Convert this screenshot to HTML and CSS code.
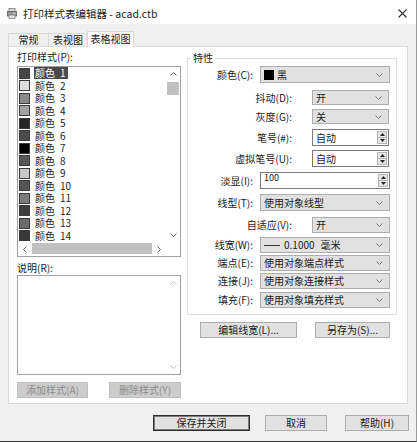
FILE: index.html
```html
<!DOCTYPE html>
<html lang="zh-CN">
<head>
<meta charset="utf-8">
<title>打印样式表编辑器 - acad.ctb</title>
<link rel="stylesheet" href="styles.css">
</head>
<body>
<div class="window">
  <div class="titlebar">
    <svg class="appicon" viewBox="0 0 10 11" aria-hidden="true">
      <rect x="2" y="0.5" width="6" height="3" fill="#d8d8d8" stroke="#7a7a7a" stroke-width="0.8"/>
      <rect x="0.5" y="3.5" width="9" height="4.5" fill="#9a9a9a" stroke="#5a5a5a" stroke-width="0.8"/>
      <rect x="2" y="7" width="6" height="3.5" fill="#e8e8e8" stroke="#7a7a7a" stroke-width="0.8"/>
      <rect x="6.5" y="4.6" width="1.6" height="1.2" fill="#e0e0e0"/>
    </svg>
    <span class="title">打印样式表编辑器 - acad.ctb</span>
    <svg class="close" viewBox="0 0 9 9" aria-hidden="true">
      <path d="M0.5 0.5 L8.5 8.5 M8.5 0.5 L0.5 8.5" stroke="#333" stroke-width="1.1" fill="none"/>
    </svg>
  </div>

  <div class="tabs">
    <div class="tab t1">常规</div>
    <div class="tab t2">表视图</div>
    <div class="tab t3 active">表格视图</div>
  </div>

  <div class="panel">
    <div class="leftcol">
      <div class="lbl">打印样式(P):</div>
      <div class="listbox">
        <div class="items">
          <div class="item"><span class="sw" style="background:#474747"></span><span class="name sel">颜色<span class="num">1</span></span></div>
          <div class="item"><span class="sw" style="background:#dedede"></span><span class="name">颜色<span class="num">2</span></span></div>
          <div class="item"><span class="sw" style="background:#8a8a8a"></span><span class="name">颜色<span class="num">3</span></span></div>
          <div class="item"><span class="sw" style="background:#a2a2a2"></span><span class="name">颜色<span class="num">4</span></span></div>
          <div class="item"><span class="sw" style="background:#262626"></span><span class="name">颜色<span class="num">5</span></span></div>
          <div class="item"><span class="sw" style="background:#4b4b4b"></span><span class="name">颜色<span class="num">6</span></span></div>
          <div class="item"><span class="sw" style="background:#000000"></span><span class="name">颜色<span class="num">7</span></span></div>
          <div class="item"><span class="sw" style="background:#575757"></span><span class="name">颜色<span class="num">8</span></span></div>
          <div class="item"><span class="sw" style="background:#c8c8c8"></span><span class="name">颜色<span class="num">9</span></span></div>
          <div class="item"><span class="sw" style="background:#555555"></span><span class="name">颜色<span class="num">10</span></span></div>
          <div class="item"><span class="sw" style="background:#7b7b7b"></span><span class="name">颜色<span class="num">11</span></span></div>
          <div class="item"><span class="sw" style="background:#3d3d3d"></span><span class="name">颜色<span class="num">12</span></span></div>
          <div class="item"><span class="sw" style="background:#6b6b6b"></span><span class="name">颜色<span class="num">13</span></span></div>
          <div class="item"><span class="sw" style="background:#383838"></span><span class="name">颜色<span class="num">14</span></span></div>
          <div class="item"><span class="sw" style="background:#151515"></span><span class="name">颜色<span class="num">15</span></span></div>
        </div>
        <div class="vscroll">
          <div class="arrow"><svg viewBox="0 0 7 4"><path d="M0.5 3.5 L3.5 0.5 L6.5 3.5" class="chev"/></svg></div>
          <div class="vtrack"><div class="vthumb"></div></div>
          <div class="arrow"><svg viewBox="0 0 7 4"><path d="M0.5 0.5 L3.5 3.5 L6.5 0.5" class="chev"/></svg></div>
        </div>
        <div class="hscroll">
          <div class="harrow"><svg viewBox="0 0 4 7"><path d="M3.5 0.5 L0.5 3.5 L3.5 6.5" class="chev"/></svg></div>
          <div class="htrack"><div class="hthumb"></div></div>
          <div class="harrow"><svg viewBox="0 0 4 7"><path d="M0.5 0.5 L3.5 3.5 L0.5 6.5" class="chev"/></svg></div>
        </div>
        <div class="corner"></div>
      </div>

      <div class="lbl desc-lbl">说明(R):</div>
      <div class="descbox">
        <div class="descarea"></div>
        <div class="vscroll off">
          <div class="arrow"><svg viewBox="0 0 7 4"><path d="M0.5 3.5 L3.5 0.5 L6.5 3.5" class="chev"/></svg></div>
          <div class="vtrack"></div>
          <div class="arrow"><svg viewBox="0 0 7 4"><path d="M0.5 0.5 L3.5 3.5 L6.5 0.5" class="chev"/></svg></div>
        </div>
      </div>

      <div class="btnrow">
        <button class="btn disabled w71">添加样式(A)</button>
        <button class="btn disabled w72">删除样式(Y)</button>
      </div>
    </div>

    <div class="rightcol">
      <fieldset class="group">
        <legend>特性</legend>

        <div class="row">
          <span class="lab w">颜色(C):</span>
          <div class="combo wide"><span class="blk"></span><span>黑</span><svg class="dd" viewBox="0 0 7 4"><path d="M0.5 0.5 L3.5 3.5 L6.5 0.5" class="chev"/></svg></div>
        </div>

        <div class="row h15 mt7">
          <span class="lab n">抖动(D):</span>
          <div class="combo narrow"><span>开</span><svg class="dd" viewBox="0 0 7 4"><path d="M0.5 0.5 L3.5 3.5 L6.5 0.5" class="chev"/></svg></div>
        </div>

        <div class="row h15 mt4">
          <span class="lab n">灰度(G):</span>
          <div class="combo narrow"><span>关</span><svg class="dd" viewBox="0 0 7 4"><path d="M0.5 0.5 L3.5 3.5 L6.5 0.5" class="chev"/></svg></div>
        </div>

        <div class="row mt5">
          <span class="lab n">笔号(#):</span>
          <div class="spin narrow"><span class="val">自动</span><span class="spinbtns"><span class="sb"><svg viewBox="0 0 5 3"><path d="M0 3 L2.5 0 L5 3Z" fill="#222"/></svg></span><span class="sb"><svg viewBox="0 0 5 3"><path d="M0 0 L2.5 3 L5 0Z" fill="#222"/></svg></span></span></div>
        </div>

        <div class="row mt4">
          <span class="lab n">虚拟笔号(U):</span>
          <div class="spin narrow"><span class="val">自动</span><span class="spinbtns"><span class="sb"><svg viewBox="0 0 5 3"><path d="M0 3 L2.5 0 L5 3Z" fill="#222"/></svg></span><span class="sb"><svg viewBox="0 0 5 3"><path d="M0 0 L2.5 3 L5 0Z" fill="#222"/></svg></span></span></div>
        </div>

        <div class="row mt5">
          <span class="lab w">淡显(I):</span>
          <div class="spin wide"><span class="val small">100</span><span class="spinbtns"><span class="sb"><svg viewBox="0 0 5 3"><path d="M0 3 L2.5 0 L5 3Z" fill="#222"/></svg></span><span class="sb"><svg viewBox="0 0 5 3"><path d="M0 0 L2.5 3 L5 0Z" fill="#222"/></svg></span></span></div>
        </div>

        <div class="row mt5">
          <span class="lab w">线型(T):</span>
          <div class="combo wide"><span>使用对象线型</span><svg class="dd" viewBox="0 0 7 4"><path d="M0.5 0.5 L3.5 3.5 L6.5 0.5" class="chev"/></svg></div>
        </div>

        <div class="row h16 mt6">
          <span class="lab n">自适应(V):</span>
          <div class="combo narrow2"><span>开</span><svg class="dd" viewBox="0 0 7 4"><path d="M0.5 0.5 L3.5 3.5 L6.5 0.5" class="chev"/></svg></div>
        </div>

        <div class="row h16 mt4">
          <span class="lab w">线宽(W):</span>
          <div class="combo wide"><span class="lw"></span><span class="lwnum">0.1000</span><span>毫米</span><svg class="dd" viewBox="0 0 7 4"><path d="M0.5 0.5 L3.5 3.5 L6.5 0.5" class="chev"/></svg></div>
        </div>

        <div class="row h16 mt2">
          <span class="lab w">端点(E):</span>
          <div class="combo wide"><span>使用对象端点样式</span><svg class="dd" viewBox="0 0 7 4"><path d="M0.5 0.5 L3.5 3.5 L6.5 0.5" class="chev"/></svg></div>
        </div>

        <div class="row h16 mt2">
          <span class="lab w">连接(J):</span>
          <div class="combo wide"><span>使用对象连接样式</span><svg class="dd" viewBox="0 0 7 4"><path d="M0.5 0.5 L3.5 3.5 L6.5 0.5" class="chev"/></svg></div>
        </div>

        <div class="row h16 mt3">
          <span class="lab w">填充(F):</span>
          <div class="combo wide"><span>使用对象填充样式</span><svg class="dd" viewBox="0 0 7 4"><path d="M0.5 0.5 L3.5 3.5 L6.5 0.5" class="chev"/></svg></div>
        </div>
      </fieldset>

      <div class="btnrow2">
        <button class="btn w97">编辑线宽(L)...</button>
        <button class="btn w75">另存为(S)...</button>
      </div>
    </div>
  </div>

  <div class="footer">
    <button class="btn default w97">保存并关闭</button>
    <button class="btn w62">取消</button>
    <button class="btn w64">帮助(H)</button>
  </div>
</div>
</body>
</html>
```

FILE: styles.css
```css
html, body {
  margin: 0;
  padding: 0;
}

body {
  font-family: "Noto Sans CJK SC", "Noto Sans", sans-serif;
  font-size: 10px;
  color: #1a1a1a;
  background: #f0f0f0;
}

.window {
  width: 417px;
  height: 442px;
  box-sizing: border-box;
  background: #f0f0f0;
  border-right: 1px solid #9a9a9a;
  border-bottom: 1px solid #3a3a3a;
  display: flex;
  flex-direction: column;
  overflow: hidden;
}

/* title bar */
.titlebar {
  height: 24px;
  flex: none;
  box-sizing: border-box;
  padding-top: 3px;
  background: #fff;
  display: flex;
  align-items: center;
}

.appicon {
  width: 10px;
  height: 11px;
  margin-left: 7px;
  margin-right: 6px;
  flex: none;
}

.title {
  flex: 1;
  font-size: 10.5px;
  line-height: 14px;
  color: #1a1a1a;
}

.close {
  width: 9px;
  height: 9px;
  margin-right: 9px;
  flex: none;
}

/* tabs */
.tabs {
  display: flex;
  align-items: flex-end;
  height: 15px;
  margin: 7px 0 0 8px;
  flex: none;
}

.tab {
  height: 13px;
  box-sizing: border-box;
  border: 1px solid #d9d9d9;
  border-bottom: none;
  background: #f0f0f0;
  text-align: center;
  line-height: 12px;
  font-size: 10px;
}

.t1 { width: 41px; }
.t2 { width: 40px; margin-left: -1px; }
.t3 { width: 47px; margin-left: -1px; }

.tab.active {
  height: 16px;
  margin-bottom: -1px;
  padding-top: 1px;
  background: #fff;
  position: relative;
  z-index: 1;
}

/* panel */
.panel {
  margin-left: 8px;
  width: 400px;
  height: 358px;
  flex: none;
  box-sizing: border-box;
  border: 1px solid #d9d9d9;
  background: #fff;
  display: flex;
  gap: 6px;
  padding: 4px 0 0 8px;
}

.leftcol {
  width: 164px;
  flex: none;
  display: flex;
  flex-direction: column;
}

.lbl {
  height: 12px;
  line-height: 12px;
}

.listbox {
  margin-top: 3px;
  height: 191px;
  box-sizing: border-box;
  border: 1px solid #a0a0a0;
  display: grid;
  grid-template-columns: 1fr 14px;
  grid-template-rows: 1fr 14px;
}

.items {
  overflow: hidden;
}

.item {
  height: 12.5px;
  display: flex;
  align-items: center;
}

.sw {
  width: 11px;
  height: 11px;
  box-sizing: border-box;
  border: 1px solid #3a3a3a;
  margin-left: 1px;
  margin-right: 4px;
  flex: none;
}

.name {
  line-height: 12px;
  padding: 0 2px 0 1px;
  white-space: nowrap;
}

.name.sel {
  background: #4a4a4a;
  color: #fff;
}

.num {
  margin-left: 5px;
}

.chev {
  fill: none;
  stroke: #606060;
  stroke-width: 1;
}

.vscroll {
  display: flex;
  flex-direction: column;
  background: #fff;
}

.arrow {
  height: 14px;
  flex: none;
  display: flex;
  align-items: center;
  justify-content: center;
}

.arrow svg {
  width: 7px;
  height: 4px;
}

.vtrack {
  flex: 1;
}

.vthumb {
  margin: 1px 1px 0 1px;
  height: 13px;
  background: #c1c1c1;
}

.vscroll.off .chev {
  stroke: #c4c4c4;
}

.hscroll {
  display: flex;
  background: #fff;
}

.harrow {
  width: 14px;
  flex: none;
  display: flex;
  align-items: center;
  justify-content: center;
}

.harrow svg {
  width: 4px;
  height: 7px;
}

.htrack {
  flex: 1;
  display: flex;
}

.hthumb {
  flex: 1;
  margin: 1px 0 2px 0;
  background: #c1c1c1;
}

.corner {
  background: #fff;
}

.desc-lbl {
  margin-top: 5px;
}

.descbox {
  margin-top: 1px;
  height: 100px;
  box-sizing: border-box;
  border: 1px solid #a0a0a0;
  display: flex;
}

.descarea {
  flex: 1;
}

.descbox .vscroll {
  width: 14px;
  flex: none;
}

.btnrow {
  margin-top: 7px;
  display: flex;
  justify-content: space-between;
}

/* buttons */
.btn {
  height: 16px;
  box-sizing: border-box;
  border: 1px solid #adadad;
  background: #e1e1e1;
  font-family: inherit;
  font-size: 10px;
  line-height: 14px;
  color: #1a1a1a;
  padding: 0;
  margin: 0;
  flex: none;
}

.btn.disabled {
  background: #cccccc;
  border-color: #bfbfbf;
  color: #8c8c8c;
}

.btn.default {
  border-color: #2e2e2e;
  box-shadow: inset 0 0 0 1px #7a7a7a;
}

.w62 { width: 62px; }
.w64 { width: 64px; }
.w71 { width: 71px; }
.w72 { width: 72px; }
.w75 { width: 75px; }
.w97 { width: 97px; }

/* right column */
.rightcol {
  width: 210px;
  flex: none;
  display: flex;
  flex-direction: column;
}

.group {
  margin: 1px 0 0 0;
  padding: 2px 6px 6px 0;
  border: 1px solid #dcdcdc;
  min-width: 0;
}

.group legend {
  padding: 0 2px;
  margin-left: 3px;
  line-height: 12px;
  font-size: 10px;
}

.row {
  display: flex;
  align-items: center;
  height: 17px;
}

.row.h15 { height: 15px; }
.row.h16 { height: 16px; }
.mt2 { margin-top: 2px; }
.mt3 { margin-top: 3px; }
.mt4 { margin-top: 4px; }
.mt5 { margin-top: 5px; }
.mt6 { margin-top: 6px; }
.mt7 { margin-top: 7px; }

.lab {
  flex: none;
  text-align: right;
  line-height: 12px;
  white-space: nowrap;
}

.lab.w {
  width: 65px;
  margin-right: 7px;
}

.lab.n {
  width: 104px;
  margin-right: 20px;
}

.combo {
  height: 100%;
  box-sizing: border-box;
  border: 1px solid #adadad;
  background: #e1e1e1;
  display: flex;
  align-items: center;
  padding-left: 3px;
  line-height: 12px;
  white-space: nowrap;
}

.wide { width: 130px; }
.narrow { width: 77px; }
.narrow2 { width: 78px; }

.dd {
  width: 7px;
  height: 4px;
  margin-left: auto;
  margin-right: 6px;
  flex: none;
}

.combo .dd .chev {
  stroke: #7a7a7a;
}

.blk {
  width: 10px;
  height: 10px;
  background: #000;
  margin-right: 3px;
  flex: none;
}

.lw {
  width: 16px;
  height: 1px;
  background: #333;
  margin-right: 4px;
  flex: none;
}

.lwnum {
  margin-right: 6px;
}

.spin {
  height: 100%;
  box-sizing: border-box;
  border: 1px solid #7a7a7a;
  background: #fff;
  display: flex;
  align-items: center;
  padding-left: 3px;
  line-height: 12px;
}

.val.small {
  align-self: flex-start;
  font-size: 9px;
  line-height: 10px;
}

.spinbtns {
  margin-left: auto;
  margin-right: 1px;
  align-self: stretch;
  width: 10px;
  display: flex;
  flex-direction: column;
  padding: 1px 0;
  box-sizing: border-box;
}

.sb {
  flex: 1;
  border: 1px solid #b4b4b4;
  background: #e6e6e6;
  display: flex;
  align-items: center;
  justify-content: center;
}

.sb + .sb {
  border-top: none;
}

.sb svg {
  width: 5px;
  height: 3px;
}

.btnrow2 {
  margin-top: 7px;
  padding-left: 13px;
  display: flex;
  gap: 18px;
}

/* footer */
.footer {
  margin-top: 11px;
  display: flex;
  justify-content: flex-end;
  padding-right: 7px;
  gap: 15px;
}

.footer .w62 {
  margin-right: 3px;
}
```
